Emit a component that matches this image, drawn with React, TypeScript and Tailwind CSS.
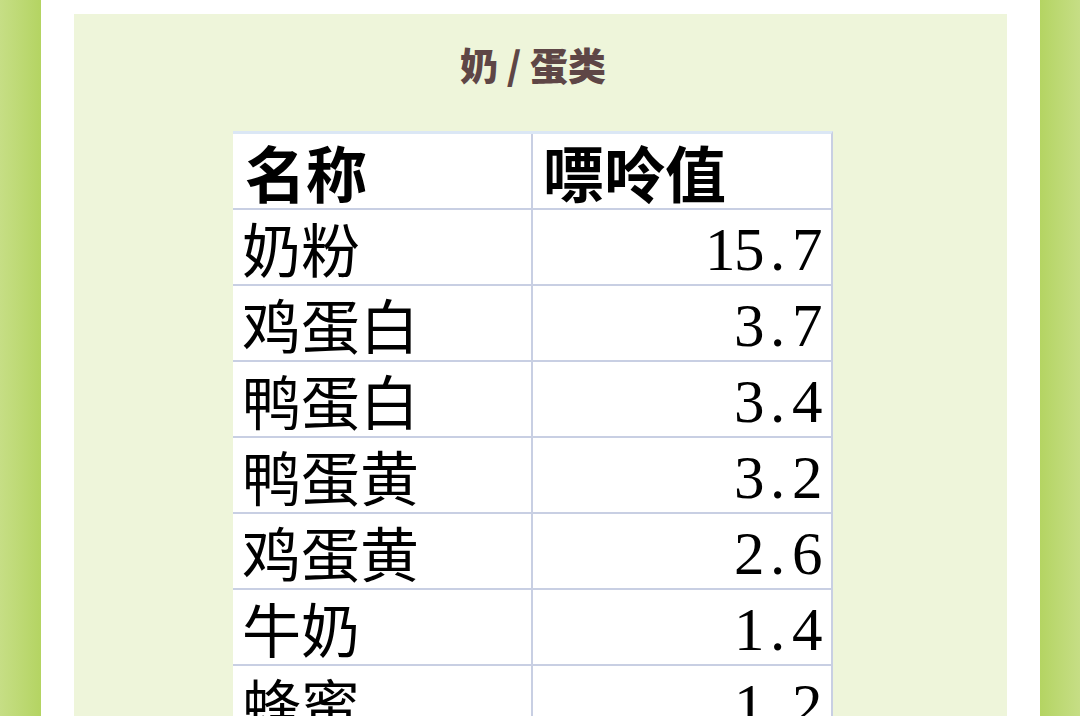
const rows: [string, string][] = [
  ['奶粉', '15.7'],
  ['鸡蛋白', '3.7'],
  ['鸭蛋白', '3.4'],
  ['鸭蛋黄', '3.2'],
  ['鸡蛋黄', '2.6'],
  ['牛奶', '1.4'],
  ['蜂蜜', '1.2'],
]

const cjk = "font-['Noto_Sans_CJK_SC',sans-serif]"

function Num({ value }: { value: string }) {
  return (
    <span className="flex font-['Liberation_Serif',serif] text-[61px] leading-none text-black">
      {value.split('').map((c, i) => (
        <span key={i} className="inline-block w-[29px] text-center">
          {c}
        </span>
      ))}
    </span>
  )
}

export default function App() {
  return (
    <div className="flex h-[716px] w-[1080px] overflow-hidden bg-white">
      <div className="w-[41px] shrink-0 bg-gradient-to-r from-[#c6de85] to-[#b4d462]" />
      <div className="flex-1 px-[33px] pt-[14px]">
        <div className="h-full bg-[#eef5da] pl-[159px]">
          <div className="w-[600px]">
            <h1
              className={`${cjk} pt-[22px] text-center text-[38px] font-black leading-[56px] text-[#5e4646]`}
            >
              奶 / 蛋类
            </h1>
            <div className="mt-[39px] border-t-[3px] border-r-2 border-t-[#dbe7f5] border-r-[#c8cfe3] bg-white">
              <div className="grid h-[76px] grid-cols-[300px_1fr] border-b-2 border-[#c8cfe3]">
                <div
                  className={`${cjk} flex items-center border-r-2 border-[#c8cfe3] pl-[12px] text-[61px] font-bold leading-none text-black`}
                >
                  名称
                </div>
                <div
                  className={`${cjk} flex items-center pl-[10px] text-[61px] font-bold leading-none text-black`}
                >
                  嘌呤值
                </div>
              </div>
              {rows.map(([name, value]) => (
                <div
                  key={name}
                  className="grid h-[76px] grid-cols-[300px_1fr] border-b-2 border-[#c8cfe3]"
                >
                  <div
                    className={`${cjk} flex items-center border-r-2 border-[#c8cfe3] pl-[9px] text-[59px] leading-none text-black`}
                  >
                    {name}
                  </div>
                  <div className="flex items-center justify-end pr-[10px] pt-[4px]">
                    <Num value={value} />
                  </div>
                </div>
              ))}
            </div>
          </div>
        </div>
      </div>
      <div className="w-[40px] shrink-0 bg-gradient-to-r from-[#b4d462] to-[#c6de85]" />
    </div>
  )
}
